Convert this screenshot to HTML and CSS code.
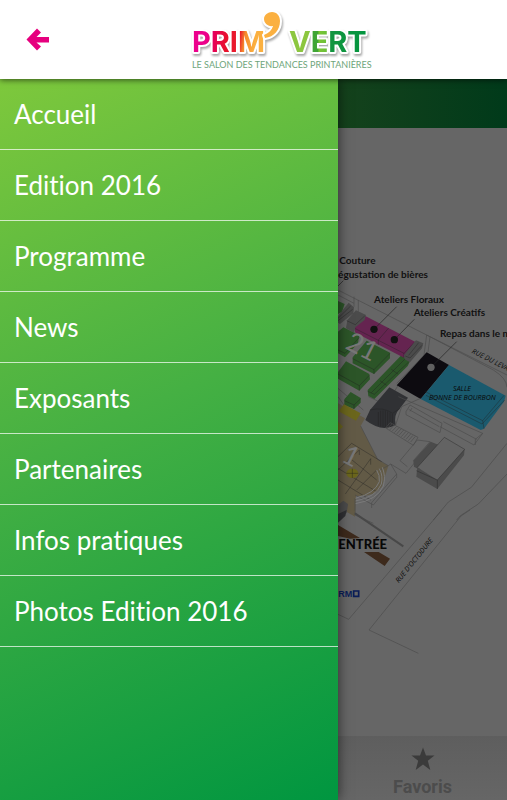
FILE: index.html
```html
<!DOCTYPE html>
<html lang="fr">
<head>
  <meta charset="UTF-8">
  <meta name="viewport" content="width=device-width, initial-scale=1">
  <title>Prim'Vert</title>
  <link rel="stylesheet" href="styles.css">
</head>
<body>
  <!-- Top bar -->
  <header class="header">
    <button class="back-btn" type="button" aria-label="Retour">
      <svg viewBox="0 0 24 24">
        <path d="M0.5 11.5L11 0.5L15 4.5L10.5 9H23V14.5H10.5L15 18.5L11 22.5Z"/>
      </svg>
    </button>
    <div class="logo">
      <svg viewBox="0 0 184 66" role="img" aria-label="Prim'Vert">
        <defs>
          <linearGradient id="prim" gradientUnits="userSpaceOnUse" x1="4" y1="0" x2="76" y2="10">
            <stop offset="0.22" stop-color="#ec008c"/>
            <stop offset="0.32" stop-color="#e6005c"/>
            <stop offset="0.5" stop-color="#e8112d"/>
            <stop offset="0.68" stop-color="#ea1c2c"/>
            <stop offset="0.75" stop-color="#f58a2c"/>
            <stop offset="0.9" stop-color="#fbb040"/>
          </linearGradient>
          <linearGradient id="vert" gradientUnits="userSpaceOnUse" x1="98" y1="0" x2="180" y2="0">
            <stop offset="0.25" stop-color="#8cc63f"/>
            <stop offset="0.28" stop-color="#3fa535"/>
            <stop offset="0.36" stop-color="#3fa535"/>
            <stop offset="0.38" stop-color="#7ac534"/>
            <stop offset="0.48" stop-color="#6abf3a"/>
            <stop offset="0.52" stop-color="#13953f"/>
            <stop offset="1" stop-color="#00953f"/>
          </linearGradient>
        </defs>
        <g class="logo-shape">
          <text class="logo-word" x="2" y="45" fill="url(#prim)">PRIM</text>
          <text class="logo-word" x="99" y="45" fill="url(#vert)">VERT</text>
          <path class="logo-comma" d="M82 5C87 5 90 9 90 14C90 23 84 30 75 31L74 28C79 26 82 23 83 19C78 20 74 16 74 12C74 8 78 5 82 5Z"/>
        </g>
        <text class="logo-tagline" x="2" y="61">LE SALON DES TENDANCES PRINTANIÈRES</text>
      </svg>
    </div>
  </header>

  <div class="layout">
    <!-- Side menu -->
    <nav class="menu">
      <a class="menu-item" href="#accueil">Accueil</a>
      <a class="menu-item" href="#edition">Edition 2016</a>
      <a class="menu-item" href="#programme">Programme</a>
      <a class="menu-item" href="#news">News</a>
      <a class="menu-item" href="#exposants">Exposants</a>
      <a class="menu-item" href="#partenaires">Partenaires</a>
      <a class="menu-item" href="#infos">Infos pratiques</a>
      <a class="menu-item" href="#photos">Photos Edition 2016</a>
    </nav>

    <!-- Page behind the menu -->
    <main class="page">
      <div class="title-bar"></div>

      <svg class="map" viewBox="0 0 507 1824" preserveAspectRatio="xMinYMin slice">
        <!-- Halls and main buildings -->
        <g transform="translate(-24 516)">
          <g class="line">
            <path d="M24 -30L290 105L531 225M24 -15L72 10M85 0V45M72 -10V20M290 105L282 165M300 110L294 156M290 105L490 210Q530 235 531 262M200 250L290 158M24 265L100 330M24 215L40 200"/>
            <path d="M24 290L60 340M115 290L190 325M150 345L205 255"/>
          </g>
          <path class="beige" d="M24 310L105 355L92 378L143 478L175 497L155 560Q135 590 78 588L75 650L24 620Z"/>
          <path class="green" d="M24 3L44 12L36 35L24 42ZM24 95L40 82L88 105L84 130L45 172L24 160ZM68 172L110 122L180 158V175L132 222L68 190ZM24 217L48 184L118 222L120 238L88 272L24 236ZM113 270L214 166L240 184L233 198L133 297L115 288ZM43 298L62 276L92 294V308L72 327L43 315Z"/>
          <path class="edge" d="M24 150L45 160L88 112M68 176L132 209L180 160M24 222L88 257L118 226M113 274L133 283L236 186M124 278L226 176M43 302L72 315L92 296M72 315V327M132 209V222M88 257V272M150 242L170 256M184 208L204 222"/>
          <path class="pink" d="M100 45L255 125L222 173L76 98L72 82Z"/>
          <path class="edge" d="M72 84L222 160L255 125M222 160V173M145 120L176 84M145 120V135"/>
          <path class="grey" d="M24 48L56 8L72 22L70 40L30 72L24 68ZM72 98L48 85L52 60L78 31L108 45L104 60L76 82ZM222 165L258 121L280 130L276 145L240 187L224 178Z"/>
          <path class="edge" d="M24 62L68 28M24 55L62 18M50 62L76 74L104 48M226 168L240 174L276 136M236 166L266 128"/>
          <path class="black" d="M290 157L357 195L272 297L200 256Z"/>
          <path class="blue" d="M357 195L527 287L522 305L462 386L452 390L272 297Z"/>
          <path class="edge" d="M284 274L458 362L522 286M288 286L456 372L524 300M458 362L462 386"/>
          <path class="dark" d="M178 262L234 293L210 325Q190 345 197 375Q155 398 106 360L120 330Z"/>
          <path class="edge" d="M145 336V377M152 332V380M159 331V382M166 332V382M173 334V381M180 338V379M187 342V376M210 325L188 340Q160 320 120 330"/>
          <path class="yellow" d="M42 313L92 340L78 362L26 334ZM24 365L39 380L24 393Z"/>
        </g>

        <!-- Annexes and terraces -->
        <g transform="translate(-24 786)">
          <path class="line" d="M228 65L240 45L336 100L330 128L228 74ZM236 58L328 110M246 54L240 64M197 105L215 50L272 25M205 20L458 130L432 165L330 110M340 95L440 148M458 130L436 148V165M92 108L143 208L175 227L182 222L228 250L262 208M210 212L262 150L300 155L250 212M210 212L232 230M175 227L150 240M182 222L200 252L125 338V354M75 315L130 345L200 262V252"/>
          <path class="grey" d="M250 212L302 155L340 170L270 240L252 230Z"/>
          <path class="roof" d="M343 142L404 178L322 270L262 232Z"/>
          <path class="grey" d="M262 232L322 270V297L259 260ZM322 270L404 178L402 196L322 297Z"/>
          <path class="edge" d="M262 232L343 142L404 178L322 270L259 242M322 270V297"/>
          <path class="line" d="M167 114L180 98L264 142L250 166ZM172 116L186 101M179 120L193 105M186 124L200 109M193 128L207 113M200 132L214 116M207 136L221 120M214 140L228 124M221 144L235 128M228 148L242 132M235 152L249 136M242 156L256 139"/>
          <path class="edge" d="M24 200L65 160L155 215M24 240L88 180M24 270L122 330M46 312L122 206V224M88 180V195M60 205L140 270M24 235L140 305M80 300L140 240"/>
          <path class="terrace" d="M140 240Q150 255 148 275Q135 310 76 325M148 236Q160 258 154 282Q138 322 76 333M157 232Q168 260 160 288Q142 330 76 341"/>
          <ellipse class="yellow" cx="67" cy="250" rx="18" ry="14"/>
          <path class="edge" d="M67 236V264M49 250H85"/>
          <path class="line" d="M531 160L424 292L355 336L310 390M531 252L445 342L390 378L380 390M75 325V375L130 400"/>
          <path class="grey" d="M24 345L40 332L54 342L50 368L24 395Z"/>
        </g>

        <!-- Entrance and streets -->
        <g transform="translate(-24 1146)">
          <path class="dark" d="M24 12L50 0L46 18L24 38Z"/>
          <path class="beige" d="M52 0L75 2L70 14L52 6Z"/>
          <path class="line" d="M336 0L56 328L24 313M420 0L393 18L117 360L265 430"/>
          <path class="wall" d="M75 10L220 109"/>
          <path class="brown" d="M24 45L90 84L60 86L24 78ZM102 126H146L180 146L164 168Z"/>
          <text class="map-entry" x="25" y="118">ENTRÉE</text>
          <text class="map-brand" x="25" y="261">RM</text>
          <path class="square" d="M71 243H86V259H71Z"/>
          <text class="map-street" transform="translate(206 220) rotate(-51)">RUE D'OCTODURE</text>
        </g>

        <!-- Labels -->
        <g transform="translate(-24 516)">
          <path class="pointer" d="M24 -42L40 -58M132 88L200 20M193 119L253 58M303 202L380 125"/>
          <circle class="dot" cx="132" cy="88" r="11"/>
          <circle class="dot" cx="193" cy="119" r="11"/>
          <circle class="dot-light" cx="303" cy="202" r="11"/>
          <text class="map-label" x="28" y="-108">Couture</text>
          <text class="map-label" x="294" y="-65" text-anchor="end">égustation de bières</text>
          <text class="map-label" x="132" y="9">Ateliers Floraux</text>
          <text class="map-label" x="251" y="49">Ateliers Créatifs</text>
          <text class="map-label" x="330" y="112">Repas dans le m</text>
          <text class="map-street" x="396" y="272" text-anchor="middle">SALLE</text>
          <text class="map-street" x="397" y="300" text-anchor="middle">BONNE DE BOURBON</text>
          <text class="map-street" transform="translate(424 158) rotate(27)">RUE DU LEVA</text>
          <text class="map-number" transform="translate(42 144) rotate(27)">21</text>
          <text class="map-number" transform="translate(30 482) rotate(27)">1</text>
        </g>
      </svg>

      <a class="tab" href="#favoris">
        <svg viewBox="0 0 24 24">
          <path d="M12 0.5L15 8.5H23.5L16.8 13.8L19.3 23L12 17.6L4.7 23L7.2 13.8L0.5 8.5H9Z"/>
        </svg>
        <span>Favoris</span>
      </a>
    </main>
  </div>
</body>
</html>
```

FILE: styles.css
```css
:root {
  --color-pink: #e6007e;
  --color-menu-start: #7ec83c;
  --color-menu-mid: #45b043;
  --color-menu-end: #009640;
  --color-page: #666;
  --font-family: Lato, "Open Sans", sans-serif;
}

* {
  box-sizing: border-box;
  margin: 0;
  padding: 0;
}

body {
  display: flex;
  flex-direction: column;
  height: 100vh;
  font-family: var(--font-family);
  background: var(--color-page);
  overflow: hidden;
}

/* === Top bar === */
.header {
  position: relative;
  z-index: 2;
  display: flex;
  align-items: center;
  height: 79px;
  padding: 0 4px 0 16px;
  background: #fff;
  box-shadow: 0 1px 6px rgba(0, 0, 0, 0.6);
}
.back-btn {
  display: flex;
  padding: 10px;
  border: none;
  background: none;
  cursor: pointer;
}
.back-btn svg {
  width: 24px;
  height: 24px;
  fill: var(--color-pink);
}
.logo {
  flex: 1;
  display: flex;
  justify-content: center;
}
.logo svg {
  width: 184px;
  height: 66px;
  overflow: visible;
}
.logo-shape {
  filter: drop-shadow(1px 2px 1px rgba(0, 0, 0, 0.35));
}
.logo-word {
  font-family: Inter, sans-serif;
  font-size: 29px;
  font-weight: 700;
}
.logo-word,
.logo-comma {
  stroke: #fff;
  stroke-width: 4px;
  stroke-linejoin: round;
  paint-order: stroke;
}
.logo-comma {
  fill: #fbb040;
}
.logo-tagline {
  font-size: 9px;
  fill: #6ea57a;
}

.layout {
  flex: 1;
  display: flex;
  min-height: 0;
}

/* === Side menu === */
.menu {
  position: relative;
  z-index: 1;
  flex: 0 0 66.67%;
  background: linear-gradient(155deg, var(--color-menu-start), var(--color-menu-mid) 45%, var(--color-menu-end));
  box-shadow: 0 0 12px rgba(0, 0, 0, 0.6);
}
.menu-item {
  display: block;
  height: 71px;
  padding-left: 14px;
  border-bottom: 1px solid rgba(255, 255, 255, 0.7);
  font-size: 26px;
  font-variant-ligatures: none;
  line-height: 70px;
  color: #fff;
  text-decoration: none;
}

/* === Page behind the menu === */
.page {
  flex: 1;
  display: flex;
  flex-direction: column;
  min-width: 0;
}
.title-bar {
  height: 49px;
  background: linear-gradient(90deg, #15421c, #003a1a);
}
.tab {
  display: flex;
  flex-direction: column;
  align-items: center;
  gap: 4px;
  height: 64px;
  padding-top: 11px;
  background: linear-gradient(#5e5e5e, #666);
  font-family: Roboto, sans-serif;
  font-size: 18px;
  font-weight: 700;
  line-height: 24px;
  color: #4c4c4c;
  text-decoration: none;
}
.tab svg {
  width: 24px;
  height: 24px;
  flex: none;
  fill: #3b3b3b;
}

/* === Map === */
.map {
  flex: 1;
  width: 100%;
  min-height: 0;
}
.line,
.edge,
.pointer,
.wall,
.terrace,
.square {
  fill: none;
}
.line {
  stroke: #4c4c4c;
  stroke-width: 2px;
}
.edge {
  stroke: #222;
  stroke-opacity: 0.6;
  stroke-width: 2px;
}
.pointer {
  stroke: #222;
  stroke-width: 2px;
}
.wall {
  stroke: #484848;
  stroke-width: 6px;
}
.terrace {
  stroke: #7a7a7a;
  stroke-width: 3px;
}
.square {
  stroke: #0b1d57;
  stroke-width: 5px;
}
.green { fill: #2c5528; }
.pink { fill: #652450; }
.blue { fill: #1a5a6e; }
.black { fill: #0d0b10; }
.dark { fill: #303134; }
.grey { fill: #4b4b4b; }
.roof { fill: #636363; }
.beige { fill: #625a46; }
.yellow { fill: #6b661c; }
.brown { fill: #3d2a1c; }
.dot { fill: #111; }
.dot-light { fill: #606060; }
.map-label {
  font-size: 30px;
  font-weight: 700;
  fill: #111;
}
.map-street {
  font-family: "Open Sans", sans-serif;
  font-size: 21px;
  font-weight: 400;
  font-style: italic;
  fill: #080808;
}
.map-entry {
  font-size: 39px;
  font-weight: 900;
  fill: #080808;
}
.map-brand {
  font-family: "Liberation Sans", sans-serif;
  font-size: 27px;
  font-weight: 700;
  fill: #0b1d57;
}
.map-number {
  font-size: 81px;
  fill: #777;
}
```
